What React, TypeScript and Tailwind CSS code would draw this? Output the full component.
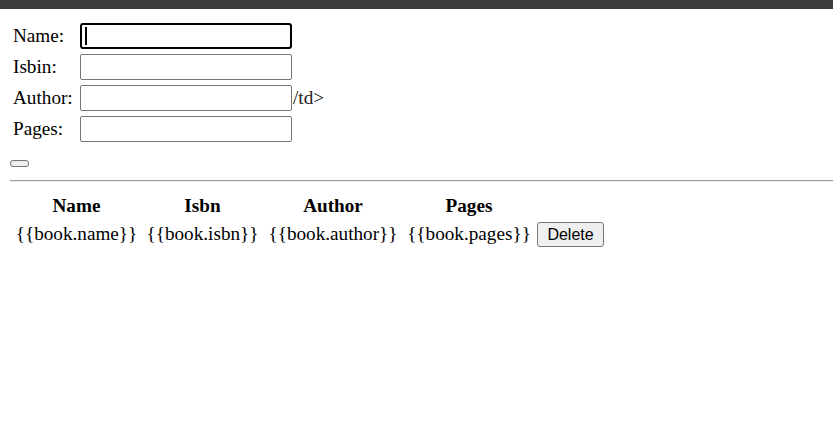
import React from "react";

export default function App() {
  const cols = [
    { h: "Name", d: "{{book.name}}", w: "w-[127px]" },
    { h: "Isbn", d: "{{book.isbn}}", w: "w-[119px]" },
    { h: "Author", d: "{{book.author}}", w: "w-[136px]" },
    { h: "Pages", d: "{{book.pages}}", w: "w-[130px]" },
  ];
  return (
    <div className="w-full min-h-[425px] bg-white text-black font-['Liberation_Serif',serif] text-[19.2px] leading-[22px]">
      <div className="h-[9px] bg-[#3c3c3c]" />
      <div className="pl-[10px] pt-[14px]">
        <div className="flex flex-col gap-[5px]">
          <div className="flex items-center h-[26px] pl-[3px]">
            <span className="w-[67px]">Name:</span>
            <div className="relative w-[212px] h-[26px] border-2 border-black rounded-[3px]">
              <div className="absolute left-[3px] top-[2px] w-[2px] h-[18px] bg-black" />
            </div>
          </div>
          <div className="flex items-center h-[26px] pl-[3px]">
            <span className="w-[67px]">Isbin:</span>
            <div className="w-[212px] h-[26px] border border-[#767676] rounded-[2px]" />
          </div>
          <div className="flex items-center h-[26px] pl-[3px]">
            <span className="w-[67px]">Author:</span>
            <div className="w-[212px] h-[26px] border border-[#767676] rounded-[2px]" />
            <span className="ml-px text-[#222]">/td&gt;</span>
          </div>
          <div className="flex items-center h-[26px] pl-[3px]">
            <span className="w-[67px]">Pages:</span>
            <div className="w-[212px] h-[26px] border border-[#767676] rounded-[2px]" />
          </div>
        </div>
        <div className="mt-[18px] w-[19px] h-[7px] bg-[#efefef] border border-[#767676] rounded-[3px]" />
        <div className="mt-[13px] border-t border-t-[#9a9a9a] border-b border-b-[#eeeeee]" />
        <div className="pl-[3px]">
          <div className="mt-[13px] flex gap-[3px] h-[22px] font-bold">
            {cols.map((c) => (
              <div key={c.h} className={`${c.w} text-center`}>
                {c.h}
              </div>
            ))}
          </div>
          <div className="mt-[5px] flex gap-[3px] items-baseline">
            {cols.map((c) => (
              <div key={c.d} className={`${c.w} text-center`}>
                {c.d}
              </div>
            ))}
            <button className="w-[67px] h-[25px] bg-[#efefef] border border-[#767676] rounded-[3px] font-['Liberation_Sans',sans-serif] text-[16px] leading-[23px] text-black">
              Delete
            </button>
          </div>
        </div>
      </div>
    </div>
  );
}
